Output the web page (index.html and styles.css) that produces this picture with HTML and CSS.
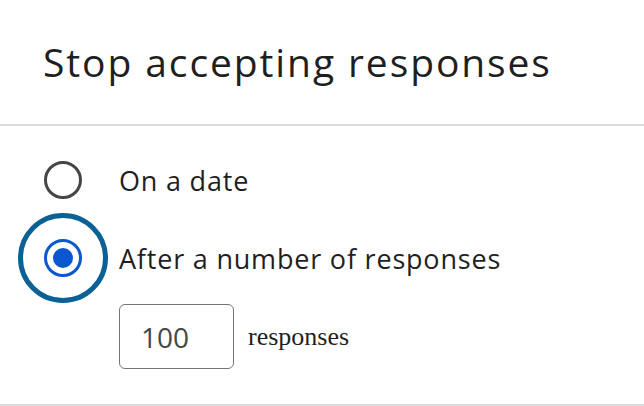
FILE: index.html
```html
<!DOCTYPE html>
<html lang="en">
<head>
<meta charset="utf-8">
<title>Stop accepting responses</title>
<link rel="stylesheet" href="styles.css">
</head>
<body>
<div class="dialog">
  <header class="header">
    <h1 class="title">Stop accepting responses</h1>
  </header>
  <section class="content">
    <div class="option">
      <span class="radio"></span>
      <span class="label">On a date</span>
    </div>
    <div class="option">
      <span class="radio checked"><span class="focus-ring"></span></span>
      <span class="label">After a number of responses</span>
    </div>
    <div class="count-row">
      <div class="count-input">100</div>
      <span class="count-unit">responses</span>
    </div>
  </section>
</div>
</body>
</html>
```

FILE: styles.css
```css
html, body {
  margin: 0;
  padding: 0;
  background: #ffffff;
}

.dialog {
  width: 644px;
  font-family: "Open Sans", Roboto, sans-serif;
  color: #1f1f1f;
}

.header {
  height: 126px;
  box-sizing: border-box;
  padding: 40px 0 0 43px;
  border-bottom: 2px solid #dadce0;
}

.title {
  margin: 0;
  font-size: 39px;
  font-weight: 400;
  line-height: 44px;
  letter-spacing: 1.9px;
  color: #1f1f1f;
}

.content {
  padding: 15px 0 0 44px;
  height: 280px;
  box-sizing: border-box;
  border-bottom: 2px solid #dadce0;
}

.option {
  display: flex;
  align-items: center;
  height: 78px;
}

.radio {
  position: relative;
  width: 38px;
  height: 38px;
  box-sizing: border-box;
  border: 3px solid #444746;
  border-radius: 50%;
  flex: none;
  margin-right: 37px;
}

.radio.checked {
  border-color: #0b57d0;
}

.radio.checked::after {
  content: "";
  position: absolute;
  left: 6px;
  top: 6px;
  width: 20px;
  height: 20px;
  border-radius: 50%;
  background: #0b57d0;
}

.focus-ring {
  position: absolute;
  left: -29px;
  top: -29px;
  width: 90px;
  height: 90px;
  box-sizing: border-box;
  border: 5px solid #0b6196;
  border-radius: 50%;
}

.label {
  font-size: 27px;
  line-height: 78px;
  margin-top: 1px;
  letter-spacing: 0.8px;
  color: #1f1f1f;
}

.count-row {
  display: flex;
  align-items: center;
  margin: 7px 0 0 75px;
}

.count-input {
  width: 115px;
  height: 65px;
  box-sizing: border-box;
  border: 1px solid #757575;
  border-radius: 6px;
  padding: 2px 0 0 21px;
  font-size: 28px;
  line-height: 61px;
  color: #444746;
}

.count-unit {
  margin-left: 14px;
  font-family: "Liberation Serif", "Times New Roman", serif;
  font-size: 26px;
  color: #1f1f1f;
}
```
